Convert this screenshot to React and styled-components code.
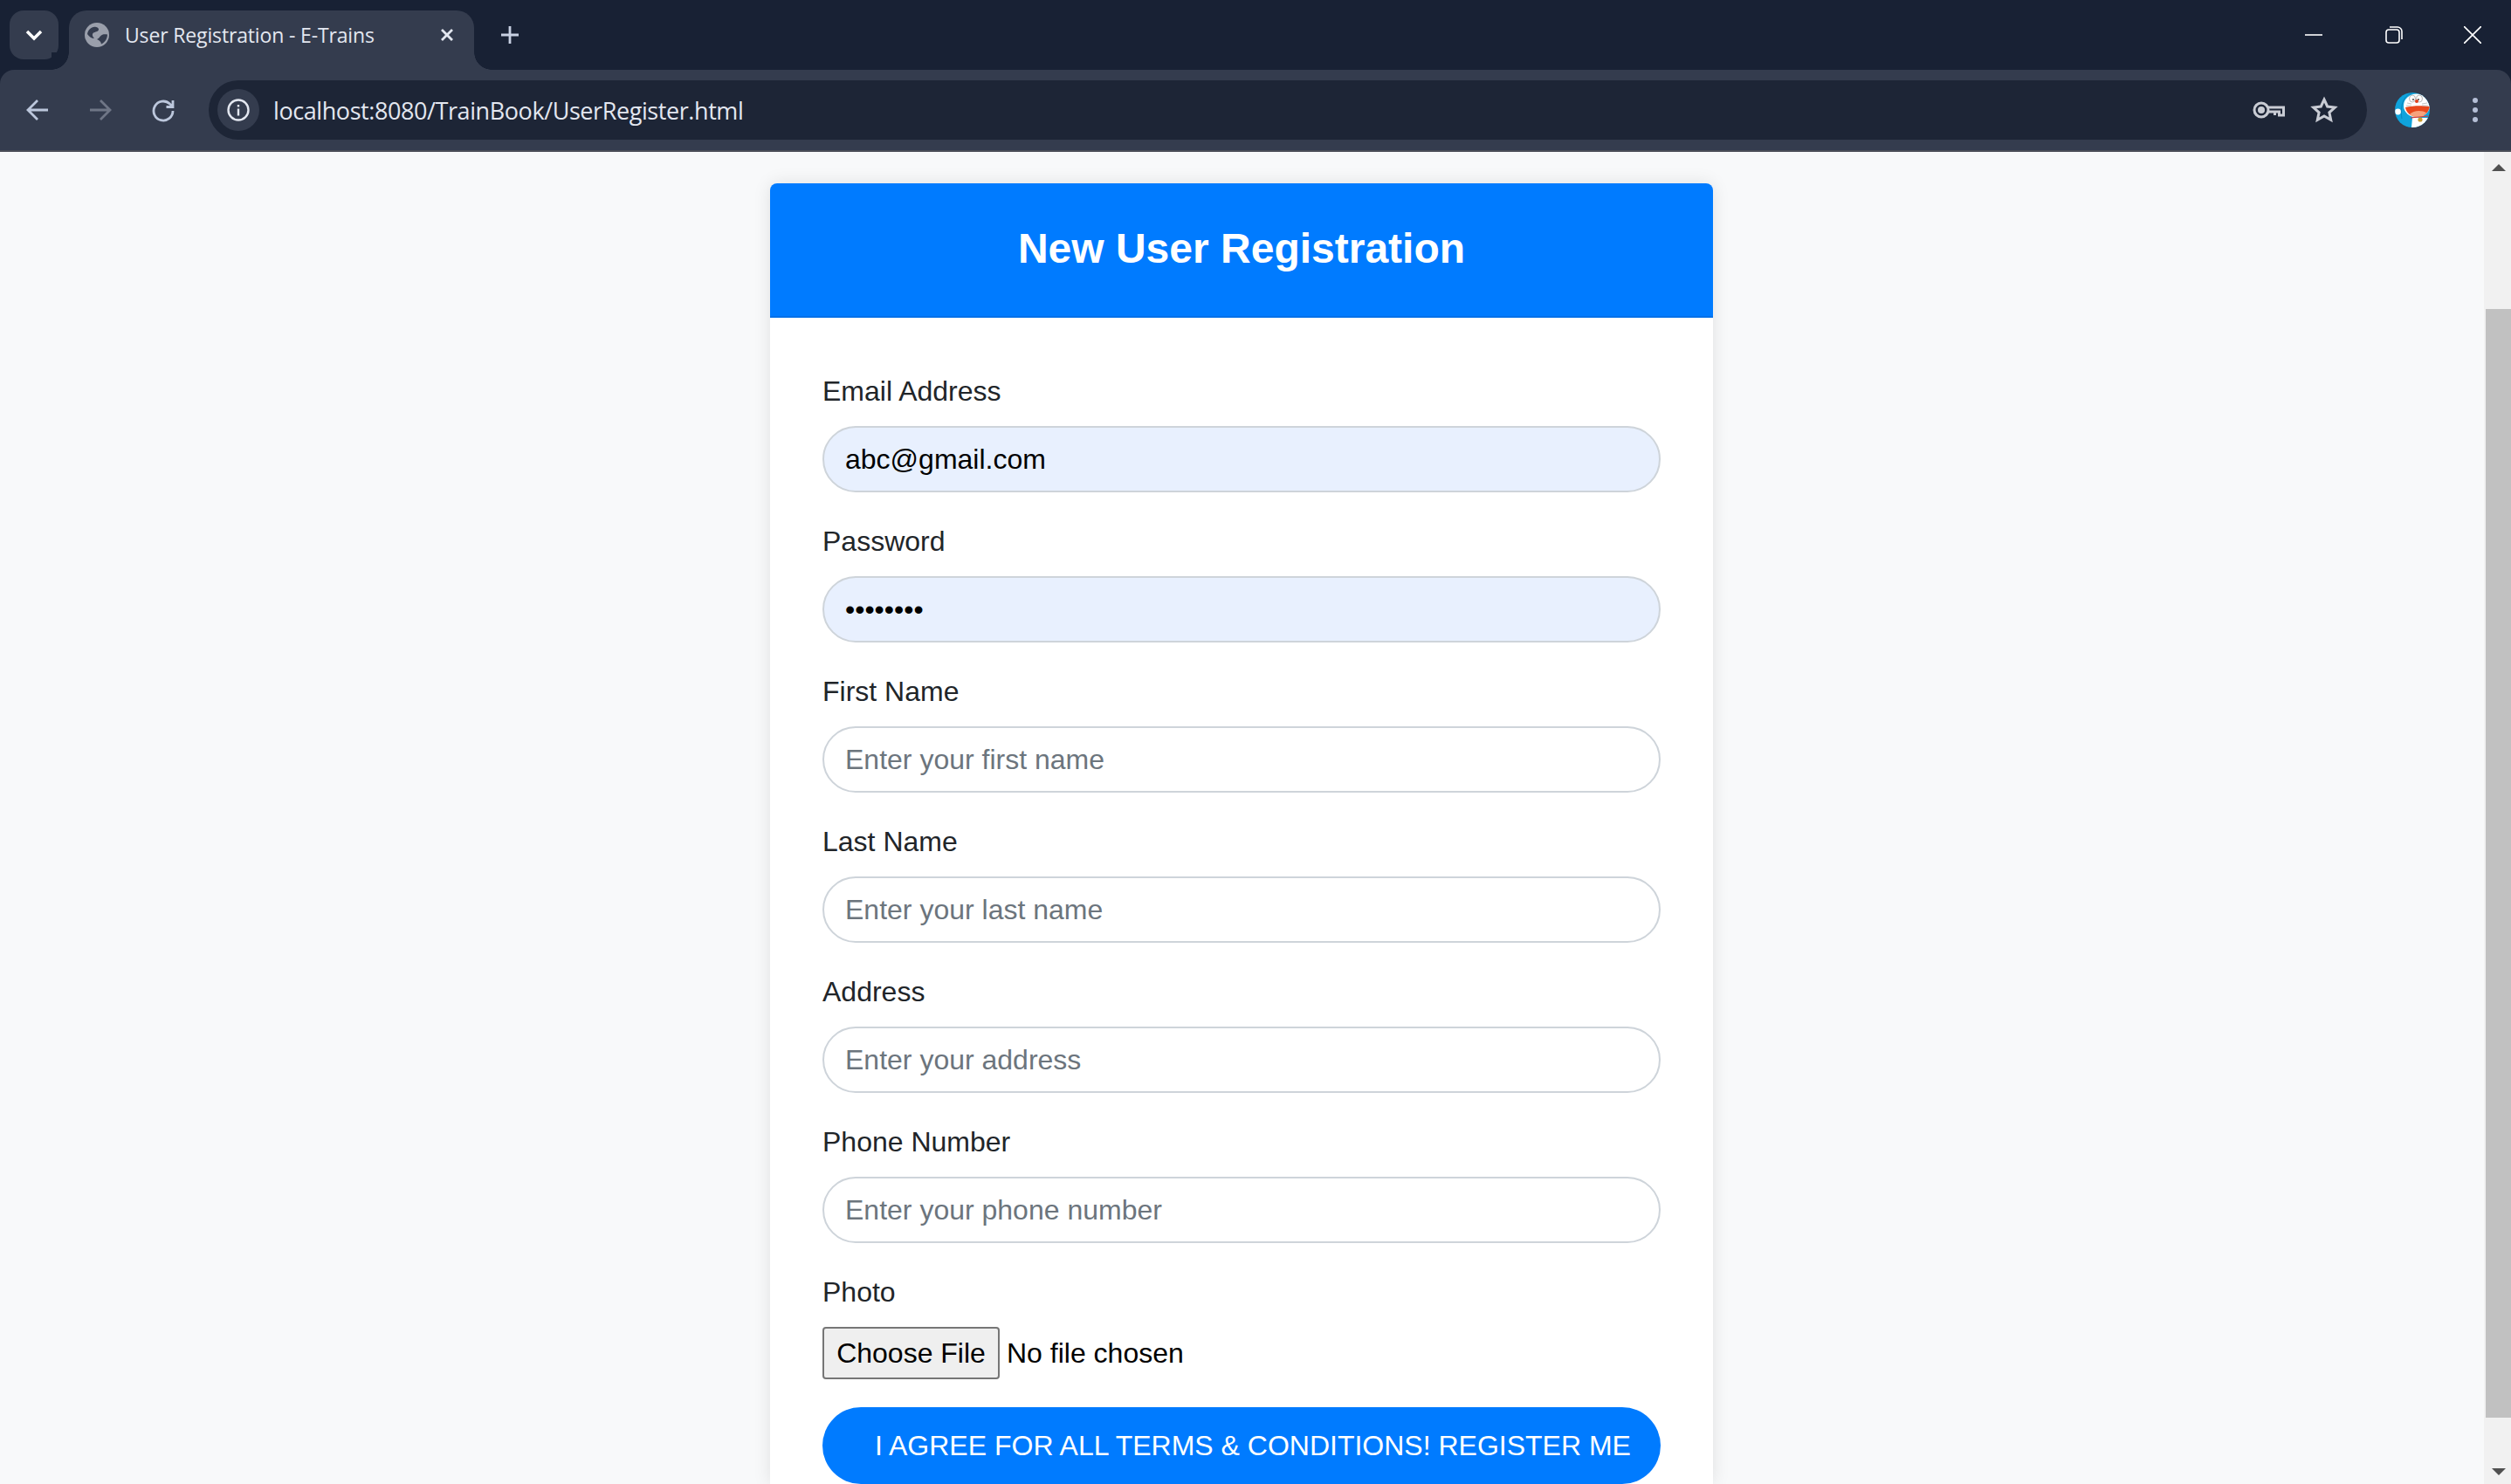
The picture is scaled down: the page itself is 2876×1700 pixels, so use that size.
import React from 'react'
import styled, { createGlobalStyle } from 'styled-components'

const GlobalStyle = createGlobalStyle`
  html, body { margin: 0; padding: 0; height: 1700px; overflow: hidden; background: #182134; }
  * { box-sizing: border-box; }
`

const Screen = styled.div`
  width: 2876px;
  height: 1700px;
  display: flex;
  flex-direction: column;
  overflow: hidden;
  background: #182134;
  font-family: "Liberation Sans", Arial, sans-serif;
`

// browser chrome
const TabStrip = styled.div`
  height: 80px;
  flex: none;
  background: #182134;
  display: flex;
  align-items: flex-end;
  padding-left: 11px;
  color: #c7d0e2;
`

const TabSearch = styled.div`
  width: 56px;
  height: 56px;
  margin-bottom: 12px;
  border-radius: 16px;
  background: #343c4e;
  color: #fff;
  display: flex;
  align-items: center;
  justify-content: center;
`

const Tab = styled.div`
  position: relative;
  width: 464px;
  height: 68px;
  margin-left: 12px;
  padding: 0 22px 12px 18px;
  background: #343c4e;
  border-radius: 20px 20px 0 0;
  display: flex;
  align-items: center;
  color: #e3e7f0;
  font-family: "Open Sans", "Noto Sans", sans-serif;
  font-size: 23px;
  letter-spacing: -0.15px;

  &::before, &::after {
    content: "";
    position: absolute;
    bottom: 0;
    width: 20px;
    height: 20px;
    background: radial-gradient(circle at var(--cx) 0, #182134 19.5px, #343c4e 20px);
  }
  &::before { left: -20px; --cx: 0; }
  &::after { right: -20px; --cx: 100%; }
`

const TabTitle = styled.span`
  flex: 1;
  margin-left: 18px;
  white-space: nowrap;
`

const NewTab = styled.div`
  margin: 0 0 12px 13px;
  width: 56px;
  height: 56px;
  display: flex;
  align-items: center;
  justify-content: center;
  color: #c7d0e2;
`

const Spacer = styled.div`
  flex: 1;
`

const WindowButtons = styled.div`
  display: flex;
  align-self: flex-start;
  height: 80px;
  align-items: center;
  color: #fff;
`

const WindowButton = styled.div`
  width: 92px;
  height: 40px;
  display: flex;
  align-items: center;
  justify-content: center;

  &:last-child { width: 88px; }
`

const Toolbar = styled.div`
  height: 94px;
  flex: none;
  background: #343c4e;
  border-radius: 16px 16px 0 0;
  border-bottom: 2px solid #4a4d57;
  display: flex;
  align-items: flex-start;
  padding-top: 12px;
`

const NavButton = styled.div`
  width: 72px;
  height: 68px;
  display: flex;
  align-items: center;
  justify-content: center;
  color: ${p => (p.$off ? '#6f7686' : '#bcc7dc')};
`

const NavGroup = styled.div`
  width: 239px;
  display: flex;
  padding-left: 7px;
`

const Omnibox = styled.div`
  width: 2472px;
  height: 68px;
  background: #1d2536;
  border-radius: 34px;
  display: flex;
  align-items: center;
  padding: 0 33px 0 10px;
  color: #e3e7f0;
`

const SiteInfo = styled.div`
  width: 48px;
  height: 48px;
  border-radius: 50%;
  background: #343c4e;
  display: flex;
  align-items: center;
  justify-content: center;
`

const Url = styled.span`
  flex: 1;
  margin-left: 16px;
  font-family: "Open Sans", "Noto Sans", sans-serif;
  font-size: 27px;
  letter-spacing: -0.42px;
  color: #e3e7f0;
  white-space: nowrap;
`

const OmniIcon = styled.div`
  display: flex;
  margin-left: ${p => p.$gap || 0}px;
  color: #c9ccd4;
`

const Avatar = styled.div`
  width: 40px;
  height: 40px;
  margin: 14px 0 0 32px;
  display: flex;
`

const MenuDots = styled.div`
  margin: 20px 0 0 49px;
  display: flex;
  flex-direction: column;
  gap: 5px;

  span {
    width: 6px;
    height: 6px;
    border-radius: 50%;
    background: #b5bfd6;
  }
`

// page
const Viewport = styled.div`
  flex: 1;
  min-height: 0;
  display: flex;
  background: #f8f9fa;
`

const Content = styled.div`
  flex: 1;
  min-width: 0;
  display: flex;
  justify-content: center;
  padding: 36px 1px 0 0;
  overflow: hidden;
`

const Card = styled.div`
  width: 1080px;
  flex: none;
  align-self: flex-start;
  background: #fff;
  border-radius: 8px 8px 0 0;
  box-shadow: 0 0 20px rgba(0, 0, 0, 0.1);
`

const CardHeader = styled.h1`
  margin: 0;
  height: 154px;
  padding-bottom: 3px;
  background: #007bff;
  border-radius: 8px 8px 0 0;
  border-bottom: 2px solid #0070e8;
  color: #fff;
  font-size: 48px;
  font-weight: 700;
  display: flex;
  align-items: center;
  justify-content: center;
`

const Form = styled.form`
  padding: 60px 60px 0 60px;
  display: flex;
  flex-direction: column;
`

const Field = styled.div`
  height: 172px;
  display: flex;
  flex-direction: column;
`

const Label = styled.label`
  height: 64px;
  font-size: 32px;
  line-height: 48px;
  color: #212529;
`

const TextInput = styled.input`
  width: 100%;
  height: 76px;
  padding: 0 24px;
  border: 2px solid #ced4da;
  border-radius: 50px;
  outline: none;
  background: ${p => (p.$filled ? '#e8f0fe' : '#fff')};
  color: #000;
  font-family: inherit;
  font-size: 32px;

  &::placeholder {
    color: #6c757d;
    opacity: 1;
  }
`

const PhotoField = styled.div`
  display: flex;
  flex-direction: column;
`

const FileInput = styled.input`
  height: 60px;
  font-family: inherit;
  font-size: 32px;
  color: #000;

  &::file-selector-button {
    height: 60px;
    width: 203px;
    padding: 0;
    margin: 0 8px 0 0;
    font-family: inherit;
    font-size: 32px;
    color: #000;
    background: #efefef;
    border: 2px solid #767676;
    border-radius: 4px;
  }
`

const SubmitButton = styled.button`
  margin-top: 32px;
  width: 100%;
  height: 88px;
  padding: 0 34px 0 60px;
  border: none;
  border-radius: 50px;
  background: #007bff;
  color: #fff;
  font-family: inherit;
  font-size: 32px;
  white-space: nowrap;
  text-align: left;
`

const Scrollbar = styled.div`
  width: 31px;
  flex: none;
  background: #f1f1f1;
  display: flex;
  flex-direction: column;
`

const ScrollArrow = styled.div`
  height: ${p => p.$h}px;
  flex: none;
  padding-left: 2px;
  display: flex;
  align-items: center;
  justify-content: center;
  color: #505050;
`

const ScrollGap = styled.div`
  height: ${p => p.$h}px;
  flex: none;
`

const ScrollThumb = styled.div`
  width: 29px;
  height: ${p => p.$h}px;
  flex: none;
  align-self: flex-end;
  background: #c1c1c1;
`

const Globe = () => (
  <svg width="28" height="28" viewBox="0 0 28 28">
    <circle cx="14" cy="14" r="14" fill="#9a9fab" />
    <path d="M3 13C4 8 8 4 13 5c3 .5 4 3 2 4.500-2 1.500-5 1-6 3.500-.5 2 .5 3 2 5-3 0-6-2-8-5z" fill="#343c4e" />
    <path d="M14 19c2-.5 3-3 5-4.500 2-1.500 4-1.500 7-1 0 5-3 9-7 11-.5-3-2-4-5-5.500z" fill="#343c4e" />
  </svg>
)

const Doraemon = () => (
  <svg width="40" height="40" viewBox="0 0 40 40">
    <defs>
      <clipPath id="avatarClip"><circle cx="20" cy="20" r="20" /></clipPath>
    </defs>
    <g clipPath="url(#avatarClip)">
      <rect width="40" height="40" fill="#0fa3dc" />
      <path d="M8 30C5 12 12 2 20 1" fill="none" stroke="#0b86bd" strokeWidth="1" />
      <ellipse cx="25" cy="15" rx="15" ry="13.500" fill="#fff" />
      <path d="M19 40l1-11h20v11z" fill="#fff" />
      <path d="M12 17c8-2 20-2 28-1-1 6-6 12-14 12-8 0-13-5-14-11z" fill="#e8481c" />
      <path d="M17 25c4-5 14-5 19-2-2 3-5 5-10 5-4 0-7-1-9-3z" fill="#f6a27c" />
      <ellipse cx="20" cy="7" rx="3.500" ry="4" fill="#fff" stroke="#9a9a9a" strokeWidth=".7" />
      <ellipse cx="28" cy="7" rx="3.500" ry="4" fill="#fff" stroke="#9a9a9a" strokeWidth=".7" />
      <circle cx="21" cy="8" r=".9" fill="#333" />
      <circle cx="27" cy="8" r=".9" fill="#333" />
      <circle cx="25" cy="10" r="2" fill="#e0401c" />
      <path d="M14 12l5 1M13 15l6 0M31 13l6-1M31 15l7 0" stroke="#b5b5b5" strokeWidth=".8" />
      <path d="M18 29l20-2" stroke="#d33" strokeWidth="1" />
      <circle cx="29" cy="31" r="2.600" fill="#c99a2e" />
      <circle cx="3.500" cy="22" r="3.400" fill="#fff" />
    </g>
  </svg>
)

const Icon = ({ w = 28, h = 28, children }) => (
  <svg width={w} height={h} viewBox={`0 0 ${w} ${h}`} fill="none" stroke="currentColor" strokeWidth="2.8">
    {children}
  </svg>
)

const fields = [
  { label: 'Email Address', type: 'email', value: 'abc@gmail.com' },
  { label: 'Password', type: 'password', value: '12345678' },
  { label: 'First Name', type: 'text', placeholder: 'Enter your first name' },
  { label: 'Last Name', type: 'text', placeholder: 'Enter your last name' },
  { label: 'Address', type: 'text', placeholder: 'Enter your address' },
  { label: 'Phone Number', type: 'text', placeholder: 'Enter your phone number' },
]

const App = () => {
  return (
    <Screen>
      <GlobalStyle />
      <TabStrip>
        <TabSearch>
          <Icon w={20} h={20}><path d="M2 6l8 8 8-8" strokeWidth="3.500" /></Icon>
        </TabSearch>
        <Tab>
          <Globe />
          <TabTitle>User Registration - E-Trains</TabTitle>
          <Icon w={18} h={18}><path d="M3 3l12 12M15 3L3 15" /></Icon>
        </Tab>
        <NewTab>
          <Icon w={22} h={22}><path d="M11 1v20M1 11h20" /></Icon>
        </NewTab>
        <Spacer />
        <WindowButtons>
          <WindowButton>
            <Icon w={20} h={20}><path d="M0 10h20" strokeWidth="1.600" /></Icon>
          </WindowButton>
          <WindowButton>
            <Icon w={20} h={20}>
              <g strokeWidth="1.600">
                <rect x="1" y="4" width="15" height="15" rx="3" />
                <path d="M5 1h9a5 5 0 0 1 5 5v9" />
              </g>
            </Icon>
          </WindowButton>
          <WindowButton>
            <Icon w={20} h={20}><path d="M0 0l20 20M20 0L0 20" strokeWidth="1.600" /></Icon>
          </WindowButton>
        </WindowButtons>
      </TabStrip>
      <Toolbar>
        <NavGroup>
          <NavButton>
            <Icon><path d="M26 14H4M14 3L3 14l11 11" /></Icon>
          </NavButton>
          <NavButton $off>
            <Icon><path d="M2 14h22M14 3l11 11-11 11" /></Icon>
          </NavButton>
          <NavButton>
            <Icon><path d="M25 15a11 11 0 1 1-3.500-8l3.500 3M25 3v7.500h-7.500" /></Icon>
          </NavButton>
        </NavGroup>
        <Omnibox>
          <SiteInfo>
            <Icon w={28} h={28}>
              <circle cx="14" cy="14" r="11.500" strokeWidth="2.400" />
              <path d="M14 12.500v8M14 8v2.500" strokeWidth="2.400" />
            </Icon>
          </SiteInfo>
          <Url>localhost:8080/TrainBook/UserRegister.html</Url>
          <OmniIcon>
            <Icon w={38} h={22}>
              <g strokeWidth="3">
                <circle cx="10" cy="11" r="8" />
                <path d="M18 8h17.500v9h-5v-4h-5v4M18 13h7" />
              </g>
              <circle cx="10" cy="11" r="4" fill="currentColor" stroke="none" />
            </Icon>
          </OmniIcon>
          <OmniIcon $gap={28}>
            <Icon w={32} h={32}>
              <path d="M16 4l3.700 8 8.600 1-6.400 5.800 1.800 8.600L16 23l-7.700 4.400 1.800-8.600L3.700 13l8.600-1z" strokeWidth="3" />
            </Icon>
          </OmniIcon>
        </Omnibox>
        <Avatar><Doraemon /></Avatar>
        <MenuDots><span /><span /><span /></MenuDots>
      </Toolbar>
      <Viewport>
        <Content>
          <Card>
            <CardHeader>New User Registration</CardHeader>
            <Form>
              {fields.map(f => (
                <Field key={f.label}>
                  <Label>{f.label}</Label>
                  <TextInput
                    type={f.type}
                    defaultValue={f.value}
                    placeholder={f.placeholder}
                    $filled={Boolean(f.value)}
                  />
                </Field>
              ))}
              <PhotoField>
                <Label>Photo</Label>
                <FileInput type="file" />
              </PhotoField>
              <SubmitButton type="button">I AGREE FOR ALL TERMS &amp; CONDITIONS! REGISTER ME</SubmitButton>
            </Form>
          </Card>
        </Content>
        <Scrollbar>
          <ScrollArrow $h={36}>
            <svg width="16" height="8" viewBox="0 0 16 8"><path d="M8 0l8 8H0z" fill="currentColor" /></svg>
          </ScrollArrow>
          <ScrollGap $h={144} />
          <ScrollThumb $h={1270} />
          <Spacer />
          <ScrollArrow $h={28}>
            <svg width="16" height="8" viewBox="0 0 16 8"><path d="M8 8L0 0h16z" fill="currentColor" /></svg>
          </ScrollArrow>
        </Scrollbar>
      </Viewport>
    </Screen>
  )
}

export default App
